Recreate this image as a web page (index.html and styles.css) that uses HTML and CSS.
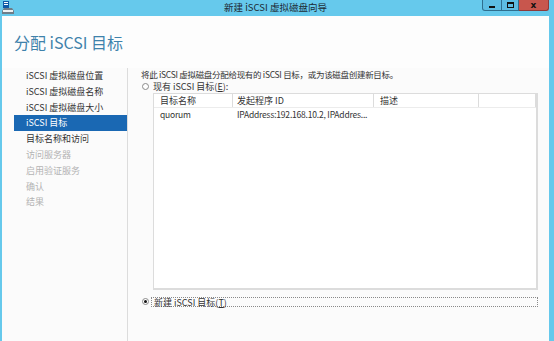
FILE: index.html
```html
<!DOCTYPE html>
<html lang="zh-CN">
<head>
    <meta charset="UTF-8">
    <title>新建 iSCSI 虚拟磁盘向导</title>
    <link rel="stylesheet" href="styles.css">
</head>
<body>
    <div class="window">
        <div class="titlebar">
            <div class="titlebar-left">
                <svg class="app-icon" width="12" height="13" viewBox="0 0 12 13" xmlns="http://www.w3.org/2000/svg">
                    <rect x="1" y="0" width="6" height="7" fill="#0f5aa8"/>
                    <rect x="2" y="1" width="4" height="1" fill="#ffffff"/>
                    <rect x="2" y="3" width="4" height="1" fill="#ffffff"/>
                    <path d="M2 7 L10 7 L12 10 L12 13 L0 13 L0 10 Z" fill="#6f7d88"/>
                    <rect x="1" y="9" width="10" height="2" fill="#eef1f3"/>
                </svg>
            </div>
            <div class="title">新建 iSCSI 虚拟磁盘向导</div>
            <div class="controls">
                <span class="ctl ctl-min"><i></i></span>
                <span class="ctl ctl-max"><i></i></span>
                <span class="ctl ctl-close">x</span>
            </div>
        </div>

        <div class="page">
            <header class="page-header">
                <h1>分配 iSCSI 目标</h1>
            </header>

            <div class="page-body">
                <ul class="steps">
                    <li>iSCSI 虚拟磁盘位置</li>
                    <li>iSCSI 虚拟磁盘名称</li>
                    <li>iSCSI 虚拟磁盘大小</li>
                    <li class="active">iSCSI 目标</li>
                    <li>目标名称和访问</li>
                    <li class="disabled">访问服务器</li>
                    <li class="disabled">启用验证服务</li>
                    <li class="disabled">确认</li>
                    <li class="disabled">结果</li>
                </ul>

                <div class="content">
                    <p class="intro">将此 iSCSI 虚拟磁盘分配给现有的 iSCSI 目标，或为该磁盘创建新目标。</p>

                    <label class="radio-row">
                        <span class="radio"></span>
                        <span>现有 iSCSI 目标(<u>E</u>):</span>
                    </label>

                    <div class="target-table">
                        <div class="table-row table-head">
                            <span class="col col-name">目标名称</span>
                            <span class="col col-id">发起程序 ID</span>
                            <span class="col col-desc">描述</span>
                            <span class="col col-rest"></span>
                        </div>
                        <div class="table-row table-item">
                            <span class="col col-name">quorum</span>
                            <span class="col col-id">IPAddress:192.168.10.2, IPAddres...</span>
                            <span class="col col-desc"></span>
                            <span class="col col-rest"></span>
                        </div>
                    </div>

                    <label class="radio-row radio-new">
                        <span class="radio checked"></span>
                        <span class="focus-box">新建 iSCSI 目标(<u>T</u>)</span>
                    </label>
                </div>
            </div>
        </div>
    </div>
</body>
</html>
```

FILE: styles.css
```css
:root {
    --frame: #66c9ec;
    --frame-dark: #2f6f8f;
    --header-text: #3f82ab;
    --text: #333333;
    --muted: #b3b3b3;
    --select: #1a68b3;
    --line: #dcdcdc;
}

* {
    margin: 0;
    padding: 0;
    box-sizing: border-box;
}

body {
    font-family: "Noto Sans CJK SC", "Liberation Sans", sans-serif;
    font-size: 9px;
    color: var(--text);
    background: var(--frame);
}

.window {
    width: 554px;
    height: 341px;
    display: flex;
    flex-direction: column;
    background: var(--frame);
    padding: 0 5px 0 2px;
    overflow: hidden;
}

/* title bar */
.titlebar {
    height: 16px;
    flex: none;
    display: flex;
    align-items: flex-start;
    margin: 0 -5px 0 -2px;
}

.titlebar-left {
    flex: 1;
    display: flex;
    padding: 1px 0 0 2px;
}

.app-icon {
    flex: none;
}

.title {
    font-size: 9.5px;
    line-height: 14px;
    color: #1d2a33;
    white-space: nowrap;
}

.controls {
    flex: 1;
    display: flex;
    justify-content: flex-end;
    padding-right: 5px;
}

.ctl {
    height: 11px;
    display: flex;
    align-items: center;
    justify-content: center;
    border: 1px solid var(--frame-dark);
    border-top: none;
    background: #5dbde3;
}

.ctl-min {
    width: 20px;
    border-radius: 0 0 0 3px;
}

.ctl-min i {
    display: block;
    width: 6px;
    height: 2px;
    margin-top: 3px;
    background: #111;
}

.ctl-max {
    width: 17px;
    border-left: none;
}

.ctl-max i {
    display: block;
    width: 7px;
    height: 6px;
    border: 1px solid #111;
    border-top-width: 2px;
}

.ctl-close {
    width: 30px;
    border-left: none;
    border-color: #8e3a3a;
    border-radius: 0 0 3px 0;
    background: #c8564d;
    color: #111;
    font-family: "DejaVu Sans", sans-serif;
    font-weight: bold;
    font-size: 9px;
    line-height: 9px;
}

/* page */
.page {
    flex: 1;
    display: flex;
    flex-direction: column;
    background: #fbfbfb;
}

.page-header {
    height: 52px;
    flex: none;
    background: #fdfdfd;
    padding: 16px 0 0 12px;
}

h1 {
    font-weight: normal;
    font-size: 16px;
    line-height: 20px;
    color: var(--header-text);
}

.page-body {
    flex: 1;
    display: flex;
}

.steps {
    list-style: none;
    width: 126px;
    flex: none;
    padding-left: 12px;
    border-right: 1px solid var(--line);
}

.steps li {
    height: 15.8px;
    line-height: 15.8px;
    padding-left: 12px;
    white-space: nowrap;
}

.steps li.active {
    background: var(--select);
    color: #fff;
}

.steps li.disabled {
    color: var(--muted);
}

.content {
    flex: 1;
    padding: 0 12px 0 13px;
}

.intro {
    line-height: 12px;
    font-size: 8.5px;
    letter-spacing: -0.3px;
}

.radio-row {
    display: flex;
    align-items: center;
    gap: 4px;
    height: 13px;
    padding-left: 1px;
}

.radio {
    width: 7px;
    height: 7px;
    flex: none;
    border: 1px solid #8a8a8a;
    border-radius: 50%;
    background: #fff;
    position: relative;
}

.radio.checked::after {
    content: "";
    position: absolute;
    left: 1px;
    top: 1px;
    width: 3px;
    height: 3px;
    border-radius: 50%;
    background: #111;
}

u {
    text-decoration: underline;
}

.target-table {
    margin-left: 12px;
    height: 197px;
    background: #fff;
    border: 1px solid var(--line);
    border-right-width: 2px;
    border-bottom-width: 2px;
}

.table-row {
    display: flex;
    height: 13px;
    line-height: 13px;
}

.table-head {
    height: 14px;
    border-bottom: 1px solid #ececec;
}

.table-item {
    font-size: 8.5px;
    letter-spacing: -0.2px;
}

.col {
    padding-left: 6px;
    white-space: nowrap;
    overflow: hidden;
}

.table-head .col {
    border-right: 1px solid var(--line);
}

.col-name {
    width: 79px;
}

.col-id {
    width: 141px;
    padding-left: 4px;
}

.col-desc {
    width: 105px;
}

.col-rest {
    width: 57px;
}

.radio-new {
    margin-top: 6px;
    height: 11px;
    gap: 2px;
}

.focus-box {
    flex: 1;
    height: 10px;
    line-height: 9px;
    padding-left: 2px;
    border: 1px dotted #8a8a8a;
}
```
